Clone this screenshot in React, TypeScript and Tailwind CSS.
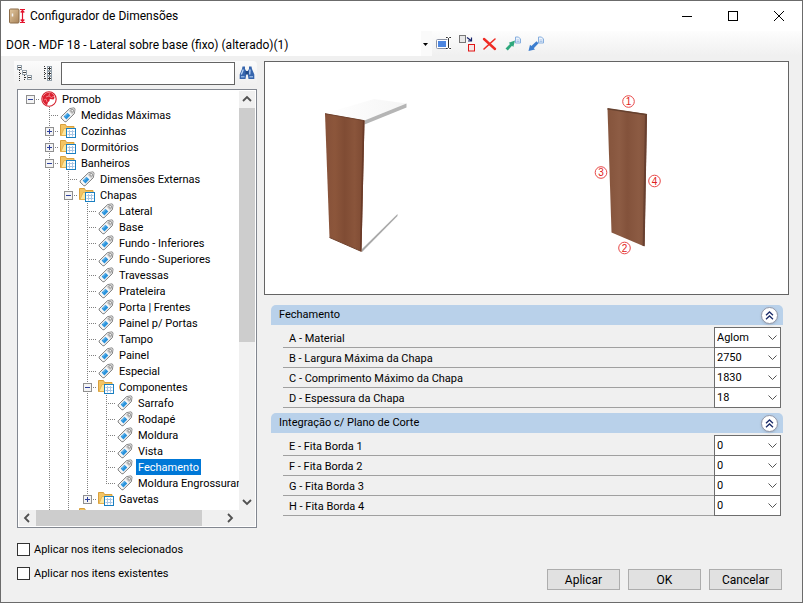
import { useState } from "react";

type Kind = "root" | "folder" | "tag";
type Node = { label: string; level: number; kind: Kind; open?: boolean; last?: boolean };

const nodes: Node[] = [
  { label: "Promob", level: 0, kind: "root", open: true },
  { label: "Medidas Máximas", level: 1, kind: "tag" },
  { label: "Cozinhas", level: 1, kind: "folder", open: false },
  { label: "Dormitórios", level: 1, kind: "folder", open: false },
  { label: "Banheiros", level: 1, kind: "folder", open: true },
  { label: "Dimensões Externas", level: 2, kind: "tag" },
  { label: "Chapas", level: 2, kind: "folder", open: true },
  { label: "Lateral", level: 3, kind: "tag" },
  { label: "Base", level: 3, kind: "tag" },
  { label: "Fundo - Inferiores", level: 3, kind: "tag" },
  { label: "Fundo - Superiores", level: 3, kind: "tag" },
  { label: "Travessas", level: 3, kind: "tag" },
  { label: "Prateleira", level: 3, kind: "tag" },
  { label: "Porta | Frentes", level: 3, kind: "tag" },
  { label: "Painel p/ Portas", level: 3, kind: "tag" },
  { label: "Tampo", level: 3, kind: "tag" },
  { label: "Painel", level: 3, kind: "tag" },
  { label: "Especial", level: 3, kind: "tag" },
  { label: "Componentes", level: 3, kind: "folder", open: true },
  { label: "Sarrafo", level: 4, kind: "tag" },
  { label: "Rodapé", level: 4, kind: "tag" },
  { label: "Moldura", level: 4, kind: "tag" },
  { label: "Vista", level: 4, kind: "tag" },
  { label: "Fechamento", level: 4, kind: "tag" },
  { label: "Moldura Engrossuram", level: 4, kind: "tag", last: true },
  { label: "Gavetas", level: 3, kind: "folder", open: false, last: true },
  { label: "", level: 2, kind: "folder" },
];

const groups = [
  {
    title: "Fechamento",
    rows: [
      ["A - Material", "Aglom"],
      ["B - Largura Máxima da Chapa", "2750"],
      ["C - Comprimento Máximo da Chapa", "1830"],
      ["D - Espessura da Chapa", "18"],
    ],
  },
  {
    title: "Integração c/ Plano de Corte",
    rows: [
      ["E - Fita Borda 1", "0"],
      ["F - Fita Borda 2", "0"],
      ["G - Fita Borda 3", "0"],
      ["H - Fita Borda 4", "0"],
    ],
  },
];

function TagIcon() {
  return (
    <svg width="16" height="16" viewBox="0 0 16 16" className="shrink-0">
      <path d="M1.2 9.8 9.6 1.6 14 .9l1 .9-.6 4.8-8.3 8.1-1.2.1L1.1 11z" fill="#f7f7f7" stroke="#7d7d7d" strokeWidth="1" />
      <path d="M9.8 2 14 1.3l.6.6-.6 4.4-1.6 1.6L8.4 3.7z" fill="#d2d2d2" />
      <path d="M3.6 9.6 7.5 5.8l2.8 2.8-3.9 3.8z" fill="#2a93dc" />
      <path d="m4.8 9.6 3-2.9" stroke="#7cc4f2" strokeWidth="1" />
      <circle cx="12.2" cy="3.8" r="1.3" fill="#fff" stroke="#777" strokeWidth=".8" />
    </svg>
  );
}

function FolderIcon() {
  return (
    <svg width="16" height="16" viewBox="0 0 16 16" className="shrink-0">
      <path d="M.5 12.5v-11h5l1 2H14v9z" fill="#f3c464" stroke="#d9a03c" />
      <path d="M1 12.500 4 5.500h11.500L13 12.500z" fill="#fee69c" stroke="#e3ad48" strokeWidth=".8" />
      <rect x="6.500" y="5.500" width="9" height="9" fill="#fff" stroke="#1a7fc1" />
      <path d="M9.500 7v6.500M12.500 7v6.500M7.500 8.500h7M7.500 11.500h7" stroke="#a9c6e4" strokeWidth="1" />
    </svg>
  );
}

function RootIcon() {
  return (
    <svg width="16" height="16" viewBox="0 0 16 16" className="shrink-0">
      <circle cx="8" cy="8" r="7.200" fill="#fff" stroke="#d3202d" strokeWidth="1.100" />
      <path d="M8.500 1.500C4.500 1.500 1.600 4.500 1.600 8c0 3 1.800 5.200 4.400 6.200l1-3 1.500-1.200.300-2 3.700.500 1-1.500-.500-3L10.500 2z" fill="#dc2031" />
      <path d="M8.500 2.500 8 5 5 6M8 5l2.500 1.500L13 5M3 9l2-1 1 3" stroke="#f6a5aa" strokeWidth=".7" fill="none" />
    </svg>
  );
}

function Guide({ kind }: { kind: "blank" | "line" | "tee" | "elbow" }) {
  return (
    <svg width="19" height="16" viewBox="0 0 19 16" className="shrink-0" shapeRendering="crispEdges" stroke="#808080" strokeDasharray="1 1">
      {kind !== "blank" && <path d={kind === "elbow" ? "M9.500 0V9" : "M9.500 0V16"} />}
      {(kind === "tee" || kind === "elbow") && <path d="M9 8.500H19" />}
    </svg>
  );
}

function Expander({ open, root, last }: { open: boolean; root: boolean; last?: boolean }) {
  return (
    <button type="button" aria-label={open ? "Recolher" : "Expandir"} className="h-4 w-[19px] shrink-0">
      <svg width="19" height="16" viewBox="0 0 19 16" shapeRendering="crispEdges">
        <g stroke="#808080" strokeDasharray="1 1">
          {!root && <path d={last ? "M9.500 0V9" : "M9.500 0V16"} />}
          <path d="M9 8.500H19" />
        </g>
        <rect x="5.500" y="4.500" width="8" height="8" fill="#f4f4f4" stroke="#8f8f8f" />
        <path d="M7 8.500h5" stroke="#2d3f9c" />
        {!open && <path d="M9.500 6v5" stroke="#2d3f9c" />}
      </svg>
    </button>
  );
}

function TreeRow({ node, selected, onSelect }: { node: Node; selected: boolean; onSelect: () => void }) {
  const ancestors = Array.from({ length: node.level }, (_, i) => i);
  return (
    <li role="treeitem" aria-level={node.level + 1} aria-selected={selected} className="flex h-4 items-center">
      {ancestors.map((i) => (
        <Guide key={i} kind={i === 0 ? "blank" : "line"} />
      ))}
      {node.open !== undefined ? (
        <Expander open={node.open} root={node.level === 0} last={node.last} />
      ) : (
        <Guide kind={node.last ? "elbow" : "tee"} />
      )}
      <span className="ml-px flex">
        {node.kind === "root" ? <RootIcon /> : node.kind === "folder" ? <FolderIcon /> : <TagIcon />}
      </span>
      <button
        type="button"
        onClick={onSelect}
        className={`ml-[3px] h-4 px-0.5 pt-px leading-[15px] whitespace-nowrap ${selected ? "bg-[#0078d7] text-white" : "text-black"}`}
      >
        {node.label}
      </button>
    </li>
  );
}

function ScrollArrow({ d, label }: { d: string; label: string }) {
  return (
    <button type="button" aria-label={label} className="flex size-4 shrink-0 items-center justify-center">
      <svg width="16" height="16" viewBox="0 0 16 16" fill="none" stroke="#505050" strokeWidth="1.800">
        <path d={d} />
      </svg>
    </button>
  );
}

function Tree() {
  const [selected, setSelected] = useState("Fechamento");
  return (
    <div className="ml-[3px] flex min-h-0 flex-1 flex-col border border-[#828790] bg-white p-px">
      <div className="flex min-h-0 flex-1">
        <ul role="tree" aria-label="Itens" className="min-w-0 flex-1 overflow-hidden pl-0.5">
          {nodes.map((n, i) => (
            <TreeRow key={i} node={n} selected={n.label === selected} onSelect={() => setSelected(n.label)} />
          ))}
        </ul>
        <div className="flex w-4 shrink-0 flex-col bg-[#f0f0f0]">
          <ScrollArrow label="Rolar para cima" d="M4 10l4-4 4 4" />
          <div className="mt-px h-[234px] bg-[#cdcdcd]" />
          <div className="flex-1" />
          <ScrollArrow label="Rolar para baixo" d="M4 6l4 4 4-4" />
        </div>
      </div>
      <div className="flex h-4 shrink-0 bg-[#f0f0f0]">
        <ScrollArrow label="Rolar para a esquerda" d="M10 4L6 8l4 4" />
        <div className="ml-px h-4 w-[166px] bg-[#cdcdcd]" />
        <div className="flex-1" />
        <ScrollArrow label="Rolar para a direita" d="M6 4l4 4-4 4" />
        <div className="w-[17px]" />
      </div>
    </div>
  );
}

function TitleBar() {
  return (
    <header className="flex h-[30px] items-center bg-white pl-[7px] text-xs">
      <svg width="18" height="16" viewBox="0 0 18 16" className="mr-1">
        <defs>
          <linearGradient id="door" x1="0" x2="1" y1="0" y2="1">
            <stop offset="0" stopColor="#e2c79f" />
            <stop offset="1" stopColor="#a9845a" />
          </linearGradient>
        </defs>
        <rect x="1.500" y="1" width="9.500" height="14" rx="1" fill="url(#door)" stroke="#8c6c49" />
        <path d="M4.500 5.500v3" stroke="#f5f5f5" strokeWidth="1.500" />
        <path d="M12 1.500h5M12 14.500h5M14.500 2v12M12.700 4.500 14.500 2.500l1.800 2M12.700 11.500l1.800 2 1.800-2" stroke="#e3122c" strokeWidth="1.200" fill="none" />
      </svg>
      <h1 className="flex-1">Configurador de Dimensões</h1>
      <button type="button" aria-label="Minimizar" className="flex h-full w-[46px] items-center justify-center">
        <svg width="10" height="10" stroke="#000" shapeRendering="crispEdges"><path d="M0 5.500h10" /></svg>
      </button>
      <button type="button" aria-label="Maximizar" className="flex h-full w-[46px] items-center justify-center">
        <svg width="10" height="10" stroke="#000" fill="none" shapeRendering="crispEdges"><rect x=".5" y=".5" width="9" height="9" /></svg>
      </button>
      <button type="button" aria-label="Fechar" className="flex h-full w-[46px] items-center justify-center">
        <svg width="10" height="10" stroke="#000"><path d="M0 0l10 10M10 0L0 10" /></svg>
      </button>
    </header>
  );
}

function ProfileBar() {
  return (
    <div className="flex h-[25px] items-center bg-linear-to-b from-[#fdfdfd] to-[#f0f0f0]">
      <div className="relative h-full w-[431px]">
        <select
          aria-label="Perfil"
          className="h-full w-full appearance-none bg-linear-to-r from-white from-[420px] to-[#fafafa] to-[420px] pt-0.5 pl-[5px] text-xs text-black"
        >
          <option>DOR - MDF 18 - Lateral sobre base (fixo) (alterado)(1)</option>
        </select>
        <svg width="5" height="3" className="pointer-events-none absolute top-[12px] right-1"><path d="M0 0h5L2.500 3z" /></svg>
      </div>
      <div className="ml-1 flex items-center gap-[7px]">
        <button type="button" aria-label="Renomear">
          <svg width="16" height="16" viewBox="0 0 16 16" fill="none">
            <rect x=".5" y="3.500" width="12" height="9" rx="1" fill="#fff" stroke="#8b93a5" />
            <rect x="2" y="5" width="8" height="6" fill="#4d86e0" />
            <path d="M10 1.500h1.500l1 1 1-1H15M12.500 2.500v9M10 12.500h1.500l1-1 1 1H15" stroke="#fff" strokeWidth="3" />
            <path d="M10 1.500h1.500l1 1 1-1H15M12.500 2.500v9M10 12.500h1.500l1-1 1 1H15" stroke="#333" />
          </svg>
        </button>
        <button type="button" aria-label="Duplicar">
          <svg width="16" height="17" viewBox="0 0 16 17" fill="none">
            <rect x=".5" y=".5" width="6" height="7" fill="#e8e8e8" stroke="#777" />
            <rect x="9.500" y="9.500" width="6" height="6.500" fill="#f5e6e6" stroke="#e01515" />
            <path d="M8 2.500 12 5.500M12.500 2.500V6H9" stroke="#18246b" strokeWidth="1.200" />
          </svg>
        </button>
        <button type="button" aria-label="Excluir">
          <svg width="16" height="16" viewBox="0 0 16 16" fill="none" stroke="#ef2b24" strokeLinecap="round">
            <path d="M2 3l11 10" strokeWidth="2.400" />
            <path d="M13 3L2 13" strokeWidth="1.600" />
          </svg>
        </button>
        {[
          { label: "Exportar", d: "M.5 12.500 5 8 3.800 6.800 10 4.500 8.300 11 7 9.800 2.800 14.500z", color: "#2ea87c" },
          { label: "Importar", d: "M.5 15 2 8.800 3.400 10 8.500 5.300 10.500 7.300 5.800 12.300 7 13.500z", color: "#3c7ed0" },
        ].map((b) => (
          <button key={b.label} type="button" aria-label={b.label}>
            <svg width="16" height="16" viewBox="0 0 16 16">
              <path d="M10.500 1h3l2 2v4h-5z" fill="#eef4fc" stroke="#86aede" />
              <path d="M11.500 4h3M11.500 5.500h3" stroke="#86aede" strokeWidth=".7" />
              <path d={b.d} fill={b.color} />
            </svg>
          </button>
        ))}
      </div>
    </div>
  );
}

function TreeTools() {
  return (
    <div className="mb-1 flex h-6 items-center rounded-r-sm bg-linear-to-b from-[#fbfbfb] to-[#f0f0f0] pl-[3px]">
      <button type="button" aria-label="Recolher tudo">
        <svg width="16" height="16" viewBox="0 0 16 16" fill="none" shapeRendering="crispEdges">
          <path d="M2.500 5v11M2.500 8.500H6M7.500 10v6M7.500 12.500H11" stroke="#333" strokeDasharray="1 1" />
          <path d="M.5 .5h4v4h-4zM5.500 5.500h4v4h-4zM10.500 10.500h4v4h-4z" fill="#fff" stroke="#93a0aa" />
          <path d="M1 2.500h3M6 7.500h3M11 12.500h3" stroke="#444" />
        </svg>
      </button>
      <button type="button" aria-label="Expandir tudo" className="ml-[9px]">
        <svg width="16" height="16" viewBox="0 0 16 16" fill="none" shapeRendering="crispEdges">
          <path d="M2.500 1v14M3 3.500h3M3 8.500h3M3 13.500h3" stroke="#333" strokeDasharray="1 1" />
          <path d="M5.500 1.500h4v4h-4zM5.500 6.500h4v4h-4zM5.500 11.500h4v4h-4z" fill="#fff" stroke="#93a0aa" />
          <path d="M6 3.500h3M7.500 2v3M6 8.500h3M7.500 7v3M6 13.500h3M7.500 12v3" stroke="#333" />
        </svg>
      </button>
      <input aria-label="Pesquisar" className="ml-[3px] h-[23px] min-w-0 flex-1 border border-[#646464] bg-white px-1 outline-none" />
      <button type="button" aria-label="Localizar" className="mr-[2px] ml-1">
        <svg width="16" height="16" viewBox="0 0 16 16">
          <path d="M3.500 1.500H6v2.500l1.300 2V9L6.500 14H.7V9.500L3 4zM12.500 1.500H10v2.500L8.700 6V9l.8 5h5.800V9.500L13 4z" fill="#3665ad" />
          <path d="M6.500 6h3v3.500h-3z" fill="#214a88" />
          <path d="M4.300 4.500 2.300 9.500M11 4.500l-.3 5" stroke="#b9d4f5" strokeWidth="1.300" />
          <path d="M2 11h3.500v1.500H2zM10.500 11H14v1.500h-3.500z" fill="#8fb4e4" />
        </svg>
      </button>
    </div>
  );
}

function Preview() {
  const marks = [
    { n: 1, x: 363.5, y: 39.5 },
    { n: 2, x: 359.5, y: 186 },
    { n: 3, x: 336, y: 110.5 },
    { n: 4, x: 389.5, y: 119 },
  ];
  return (
    <figure className="border border-[#646464] bg-white">
      <svg width="100%" height="232" viewBox="0 0 523 232" preserveAspectRatio="xMinYMid meet" role="img" aria-label="Fechamento">
        <defs>
          <linearGradient id="wood" x1="0" x2="1" y1="0" y2="0">
            <stop offset="0" stopColor="#865139" />
            <stop offset=".25" stopColor="#8c563b" />
            <stop offset=".5" stopColor="#804c34" />
            <stop offset=".75" stopColor="#8a553b" />
            <stop offset="1" stopColor="#7c4932" />
          </linearGradient>
          <linearGradient id="woodLight" x1="0" x2="1" y1="0" y2="0">
            <stop offset="0" stopColor="#85543c" />
            <stop offset=".3" stopColor="#8d5c44" />
            <stop offset=".5" stopColor="#83523b" />
            <stop offset=".8" stopColor="#8c5b43" />
            <stop offset="1" stopColor="#7e4f39" />
          </linearGradient>
          <linearGradient id="shelf" x1="0" x2="1" y1="0" y2="0">
            <stop offset="0" stopColor="#fff" />
            <stop offset="1" stopColor="#f5f5f5" />
          </linearGradient>
        </defs>
        <path d="M60 51.500 109 37l32.500 4.500-42 17z" fill="url(#shelf)" />
        <path d="M99.500 58.500 141.500 41.500v4L99.500 62.500z" fill="#b5b5b5" />
        <path d="M97 187 132.500 152v2L97 190z" fill="#a9a9a9" />
        <path d="M60 51.500 99.500 58.500 96.500 189.500 64.500 175.500z" fill="url(#wood)" />
        <path d="M98.700 59 95.700 189" stroke="#693a28" strokeWidth="1.600" />
        <path d="M60 51.700 99.500 58.700M64.500 175.500 96.500 189.500" stroke="#6f422e" strokeWidth="1" />
        <path d="M342.500 46.500 382 52 379.500 184.500 346.500 170.500z" fill="url(#woodLight)" />
        <path d="M381 53 378.700 184" stroke="#684030" strokeWidth="2" />
        <path d="M342.500 46.700 382 52.700" stroke="#65412f" strokeWidth="1.500" />
        <g fill="none" stroke="#e84848">
          {marks.map((m) => (
            <circle key={m.n} cx={m.x} cy={m.y} r="5.800" />
          ))}
        </g>
        <g fill="#df2020" textAnchor="middle" className="font-['Liberation_Sans',sans-serif] text-[10px]">
          {marks.map((m) => (
            <text key={m.n} x={m.x} y={m.y + 3.5}>
              {m.n}
            </text>
          ))}
        </g>
      </svg>
    </figure>
  );
}

function Group({ title, rows }: { title: string; rows: string[][] }) {
  return (
    <section className="mr-[6px] ml-[7px]">
      <div className="flex h-5 items-center justify-between rounded-t-[5px] bg-[#b9d1ea] pr-[5px] pl-2">
        <h2 className="pt-px">{title}</h2>
        <button type="button" aria-label={`Recolher ${title}`} className="flex size-[17px] items-center justify-center rounded-full border border-[#9297a8] bg-white shadow-sm">
          <svg width="9" height="9" viewBox="0 0 9 9" fill="none" stroke="#1c2d6b" strokeWidth="1.300">
            <path d="M1 4.200 4.500 1 8 4.200M1 8.200 4.500 5 8 8.200" />
          </svg>
        </button>
      </div>
      <div className="mt-[3px] mr-[2px] ml-3">
        {rows.map(([label, value]) => (
          <div key={label} className="flex h-5 border-b border-[#a0a0a0]">
            <label htmlFor={label} className="flex-1 pl-1.5 leading-[22px]">
              {label}
            </label>
            <div className="relative -my-px w-[67px]">
              <select
                id={label}
                defaultValue={value}
                className="block h-full w-full appearance-none border border-[#6d6d6d] bg-white pt-px pl-0.5 text-black"
              >
                <option>{value}</option>
              </select>
              <svg width="9" height="6" viewBox="0 0 9 6" fill="none" stroke="#555" className="pointer-events-none absolute top-2 right-1">
                <path d="M.5 .5 4.500 4.500 8.500 .5" />
              </svg>
            </div>
          </div>
        ))}
      </div>
    </section>
  );
}

function Check({ label }: { label: string }) {
  return (
    <label className="flex h-[13px] items-center gap-1">
      <input type="checkbox" className="size-[13px] appearance-none border border-[#333] bg-white checked:bg-[#0078d7]" />
      <span className="pt-px">{label}</span>
    </label>
  );
}

export default function App() {
  return (
    <div className="flex h-screen flex-col overflow-hidden border border-[#6b6b6b] bg-[#f0f0f0] font-['Roboto','Liberation_Sans',sans-serif] text-[11px] text-black">
      <TitleBar />
      <ProfileBar />
      <main className="mt-[5px] flex min-h-0 flex-1 gap-[7px] pr-[13px] pl-[13px]">
        <aside className="flex w-[243px] shrink-0 flex-col">
          <TreeTools />
          <Tree />
        </aside>
        <div className="flex min-w-0 flex-1 flex-col">
          <Preview />
          <div className="mt-[10px] flex flex-col gap-[5px]">
            {groups.map((g) => (
              <Group key={g.title} {...g} />
            ))}
          </div>
        </div>
      </main>
      <footer className="flex items-end justify-between pt-[15px] pr-5 pb-3 pl-4">
        <div className="flex flex-col gap-[11px] pb-2.5">
          <Check label="Aplicar nos itens selecionados" />
          <Check label="Aplicar nos itens existentes" />
        </div>
        <div className="flex gap-2">
          {["Aplicar", "OK", "Cancelar"].map((b) => (
            <button key={b} type="button" className="h-[21px] w-[73px] border border-[#adadad] bg-[#e1e1e1] pt-px text-xs">
              {b}
            </button>
          ))}
        </div>
      </footer>
    </div>
  );
}
